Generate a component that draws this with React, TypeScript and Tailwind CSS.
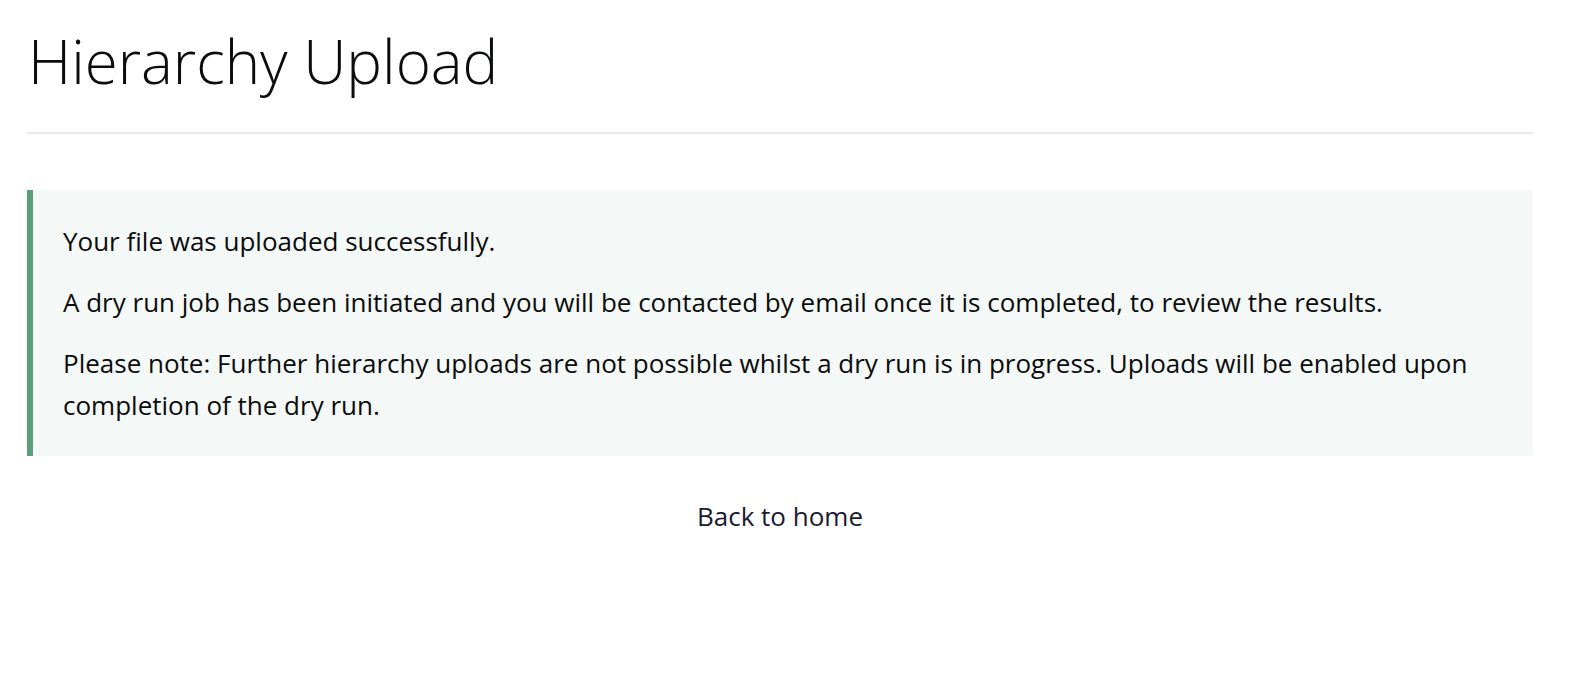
export default function App() {
  return (
    <div className="min-h-screen bg-white font-['Open_Sans',sans-serif] text-[#0b0c0c] pl-[27px] pr-[43px]">
      <h1 className="pt-[31px] pb-[41px] text-[60px] leading-[60px] font-light border-b-2 border-[#ebebef] pl-px">
        Hierarchy Upload
      </h1>
      <div className="mt-[56px] border-l-[6px] border-[#5a9e7a] bg-[#f4f8f7] pl-[30px] pr-8 pt-[30px] pb-[30px] text-[26px] leading-[42px]">
        <p className="mb-[19px]">Your file was uploaded successfully.</p>
        <p className="mb-[19px]">
          A dry run job has been initiated and you will be contacted by email once it is completed, to review the results.
        </p>
        <p>
          Please note: Further hierarchy uploads are not possible whilst a dry run is in progress. Uploads will be enabled upon completion of the dry run.
        </p>
      </div>
      <div className="mt-[39px] flex justify-center">
        <a href="#" className="text-[26px] leading-[42px] text-[#1a1a33]">
          Back to home
        </a>
      </div>
    </div>
  )
}
